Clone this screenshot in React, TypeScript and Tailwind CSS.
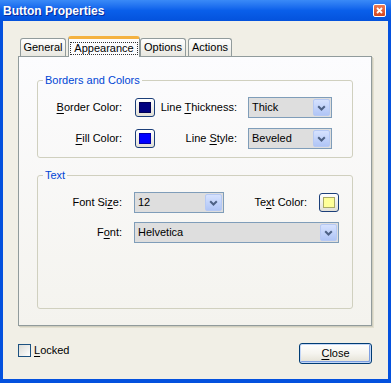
import React from "react";

function U({ children }: { children: React.ReactNode }) {
  return <span className="underline underline-offset-[2px] decoration-1">{children}</span>;
}

function Swatch({ fill }: { fill: string }) {
  return (
    <div className="w-[20px] h-[19px] shrink-0 rounded-[3px] border border-[#1C3F79] bg-linear-to-b from-[#FFFFFF] to-[#E2E0D6] p-[3px]">
      <div className={`w-full h-full border border-[#00000055] ${fill}`} />
    </div>
  );
}

function Chevron() {
  return (
    <svg width="9" height="6" viewBox="0 0 9 6">
      <path d="M1.2 1.2 L4.5 4.5 L7.8 1.2" fill="none" stroke="#4D6185" strokeWidth="2" />
    </svg>
  );
}

function Combo({ value, w }: { value: string; w: string }) {
  return (
    <div className={`${w} h-[21px] shrink-0 border border-[#7F9DB9] bg-[#DEDEDE] flex items-center justify-between`}>
      <span className="pl-[3px]">{value}</span>
      <div className="w-[17px] h-[17px] mr-px rounded-[2px] border border-[#B6C9F4] bg-linear-to-b from-[#D6E2FE] to-[#B0C5F6] flex items-center justify-center">
        <Chevron />
      </div>
    </div>
  );
}

function Tab({ label, w, ml }: { label: string; w: string; ml: string }) {
  return (
    <div
      className={`${w} ${ml} h-[18px] rounded-t-[3px] border border-b-0 border-[#919B9C] bg-linear-to-b from-[#FFFFFF] to-[#E8E7E0] flex items-center justify-center`}
    >
      {label}
    </div>
  );
}

export default function App() {
  return (
    <div className="w-[391px] h-[383px] flex flex-col bg-[#0451DE] font-['Liberation_Sans',Arial,sans-serif] text-[11px] leading-[13px] text-black select-none overflow-hidden">
      {/* title bar */}
      <div className="h-[21px] shrink-0 flex items-center justify-between pl-[3px] pr-[5px] bg-linear-to-b from-[#3A8AF7] via-[#0A5FEA] to-[#0452DC]">
        <span className="text-white font-bold text-[12px] leading-[14px] [text-shadow:1px_1px_0_#0A2A9A]">
          Button Properties
        </span>
        <div className="w-[13px] h-[13px] rounded-[2px] border border-white bg-linear-to-b from-[#EE7A52] to-[#D4441C] flex items-center justify-center">
          <svg width="7" height="7" viewBox="0 0 7 7">
            <path d="M1 1 L6 6 M6 1 L1 6" stroke="#FFFFFF" strokeWidth="1.8" />
          </svg>
        </div>
      </div>

      {/* body */}
      <div className="flex-1 flex flex-col mx-[3px] mb-[4px] bg-[#F1EFE6] pl-[15px] pr-[16px] pt-[15px]">
        {/* tabs */}
        <div className="relative z-10 h-[20px] flex items-end pl-[2px]">
          <Tab label="General" w="w-[46px]" ml="ml-0" />
          <div className="ml-[2px] w-[72px] h-[21px] -mb-px rounded-t-[3px] border-x border-[#919B9C] border-t-[3px] border-t-[#F4B240] bg-[#FCFCFE] flex items-center justify-center">
            <span className="w-[68px] h-[13px] flex items-center justify-center border border-dotted border-[#333333] leading-[11px]">
              Appearance
            </span>
          </div>
          <Tab label="Options" w="w-[46px]" ml="ml-0" />
          <Tab label="Actions" w="w-[44px]" ml="ml-[2px]" />
        </div>

        {/* panel */}
        <div className="h-[270px] shrink-0 flex flex-col border border-[#919B9C] bg-linear-to-b from-[#FCFCFE] to-[#F4F3EE] px-[18px] shadow-[1px_1px_0_#D0CEBF,2px_2px_0_#E3E0D0]">
          <fieldset className="mt-[17px] border border-[#D0D0BF] rounded-[3px] pb-[8px]">
            <legend className="ml-[5px] px-[2px] text-[#0046D5]">Borders and Colors</legend>
            <div className="flex flex-col gap-[10px] pt-[10px]">
              <div className="flex items-center">
                <span className="w-[84px] text-right">
                  <U>B</U>order Color:
                </span>
                <div className="ml-[13px]">
                  <Swatch fill="bg-[#000080]" />
                </div>
                <span className="w-[82px] text-right">
                  Line <U>T</U>hickness:
                </span>
                <div className="ml-[11px]">
                  <Combo value="Thick" w="w-[84px]" />
                </div>
              </div>
              <div className="flex items-center">
                <span className="w-[84px] text-right">
                  <U>F</U>ill Color:
                </span>
                <div className="ml-[13px]">
                  <Swatch fill="bg-[#0000FF]" />
                </div>
                <span className="w-[82px] text-right">
                  Line <U>S</U>tyle:
                </span>
                <div className="ml-[11px]">
                  <Combo value="Beveled" w="w-[84px]" />
                </div>
              </div>
            </div>
          </fieldset>

          <fieldset className="mt-[11px] mb-[16px] flex-1 border border-[#D0D0BF] rounded-[3px]">
            <legend className="ml-[5px] px-[2px] text-[#0046D5]">Text</legend>
            <div className="flex flex-col gap-[9px] pt-[10px]">
              <div className="w-[301px] flex items-center">
                <span className="w-[84px] text-right">
                  Font Si<U>z</U>e:
                </span>
                <div className="ml-[12px]">
                  <Combo value="12" w="w-[90px]" />
                </div>
                <span className="flex-1 text-right pr-[12px]">
                  Te<U>x</U>t Color:
                </span>
                <Swatch fill="bg-[#FFFF99]" />
              </div>
              <div className="flex items-center">
                <span className="w-[84px] text-right">
                  F<U>o</U>nt:
                </span>
                <div className="ml-[12px]">
                  <Combo value="Helvetica" w="w-[205px]" />
                </div>
              </div>
            </div>
          </fieldset>
        </div>

        {/* bottom row */}
        <div className="mt-[17px] flex items-start justify-between">
          <div className="flex items-center gap-[3px]">
            <div className="w-[13px] h-[13px] border border-[#1C5180] bg-linear-to-br from-[#DCDCD7] to-[#FFFFFF]" />
            <span className="pt-px">
              <U>L</U>ocked
            </span>
          </div>
          <div className="w-[73px] h-[21px] rounded-[3px] border border-[#003C74] bg-linear-to-b from-[#FFFFFF] via-[#F5F4EF] to-[#E3E0D3] shadow-[inset_0_0_0_1px_#C4D7F7,inset_-1px_-1px_0_1px_#7E9FE2] flex items-center justify-center">
            <span>
              <U>C</U>lose
            </span>
          </div>
        </div>
      </div>
    </div>
  );
}
